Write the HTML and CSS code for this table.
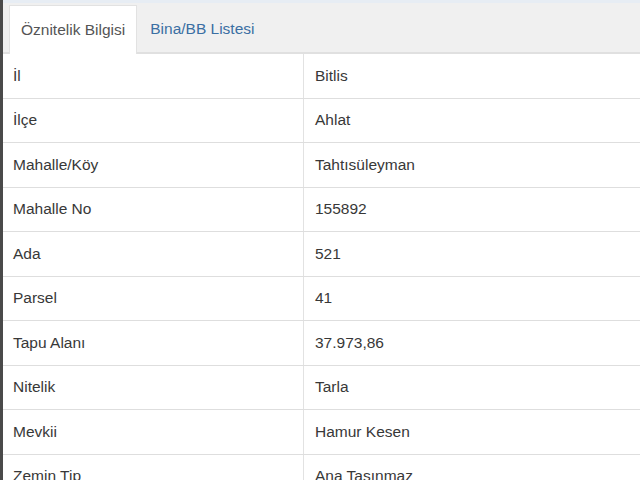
FILE: index.html
```html
<!DOCTYPE html>
<html lang="tr">
<head>
<meta charset="utf-8">
<link rel="stylesheet" href="styles.css">
</head>
<body>
<div class="frame">
  <div class="topstrip"></div>
  <div class="tabs">
    <div class="tab active">Öznitelik Bilgisi</div>
    <div class="tab">Bina/BB Listesi</div>
  </div>
  <div class="table">
    <div class="row"><div class="key">İl</div><div class="val">Bitlis</div></div>
    <div class="row"><div class="key">İlçe</div><div class="val">Ahlat</div></div>
    <div class="row"><div class="key">Mahalle/Köy</div><div class="val">Tahtısüleyman</div></div>
    <div class="row"><div class="key">Mahalle No</div><div class="val">155892</div></div>
    <div class="row"><div class="key">Ada</div><div class="val">521</div></div>
    <div class="row"><div class="key">Parsel</div><div class="val">41</div></div>
    <div class="row"><div class="key">Tapu Alanı</div><div class="val">37.973,86</div></div>
    <div class="row"><div class="key">Nitelik</div><div class="val">Tarla</div></div>
    <div class="row"><div class="key">Mevkii</div><div class="val">Hamur Kesen</div></div>
    <div class="row"><div class="key">Zemin Tip</div><div class="val">Ana Taşınmaz</div></div>
  </div>
</div>
</body>
</html>
```

FILE: styles.css
```css
html, body {
  margin: 0;
  padding: 0;
  background: #ffffff;
}
body {
  font-family: "Liberation Sans", Arial, sans-serif;
  font-size: 15.5px;
  color: #383838;
  overflow: hidden;
}
.frame {
  width: 640px;
  height: 480px;
  border-left: 3px solid #4a4a4a;
  box-sizing: border-box;
  overflow: hidden;
}
.topstrip {
  height: 3px;
  background: #e7edf4;
}
.tabs {
  display: flex;
  align-items: flex-end;
  gap: 2px;
  background: #f0f0f0;
  padding: 2px 0 0 6px;
  height: 47px;
  border-bottom: 2px solid #e0e0e0;
}
.tab {
  height: 47px;
  display: flex;
  align-items: center;
  padding: 0 11px;
  color: #3b6fa3;
  box-sizing: border-box;
}
.tab.active {
  background: #ffffff;
  color: #555555;
  border: 1px solid #e2e2e2;
  border-bottom: none;
  margin-bottom: -2px;
  height: 49px;
}
.table {
  display: flex;
  flex-direction: column;
}
.row {
  display: grid;
  grid-template-columns: 301px 1fr;
  height: 44.5px;
  border-bottom: 1px solid #dedede;
  box-sizing: border-box;
}
.key, .val {
  display: flex;
  align-items: center;
}
.key {
  padding-left: 10px;
  border-right: 1px solid #e2e2e2;
}
.val {
  padding-left: 11px;
}
```
